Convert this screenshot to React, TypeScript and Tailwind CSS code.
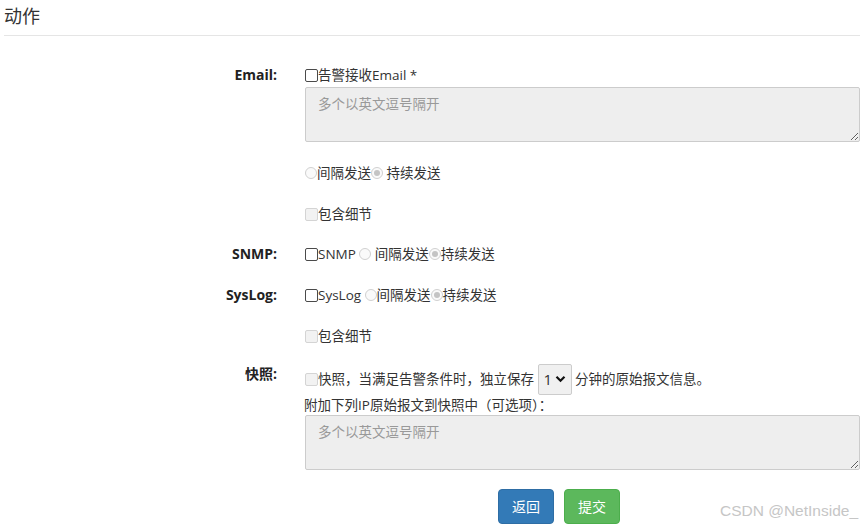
import React from 'react'

const font = { fontFamily: '"Open Sans", "Noto Sans CJK SC", sans-serif' }

function Check({ disabled = false }: { disabled?: boolean }) {
  return (
    <span
      className={
        disabled
          ? 'inline-block w-[13px] h-[13px] rounded-[2px] border border-[#d4d4d4] bg-[#f2f2f2] shrink-0'
          : 'inline-block w-[13px] h-[13px] rounded-[2px] border border-[#4a4a4a] bg-white shrink-0'
      }
    />
  )
}

function Radio({ checked = false }: { checked?: boolean }) {
  return (
    <span className="inline-flex items-center justify-center w-[12px] h-[12px] rounded-full border border-[#d0d0d0] bg-[#fafafa] shrink-0">
      {checked && <span className="w-[6px] h-[6px] rounded-full bg-[#c4c4c4]" />}
    </span>
  )
}

function Area() {
  return (
    <textarea
      readOnly
      placeholder="多个以英文逗号隔开"
      className="block w-full h-[55px] bg-[#eeeeee] border border-[#cccccc] rounded-[2px] px-[12px] py-[6px] text-[13.5px] leading-[20px] text-[#555] placeholder:text-[#999] outline-none resize"
    />
  )
}

function Label({ children }: { children: React.ReactNode }) {
  return <div className="text-right font-bold text-[14px] text-[#222] leading-[18px]">{children}</div>
}

export default function App() {
  return (
    <div className="relative w-[865px] h-[530px] bg-white overflow-hidden text-[#333]" style={font}>
      <div className="mx-[4px] mr-[5px] h-[36px] border-b border-[#e5e5e5]">
        <h1 className="pt-[3px] text-[18px] leading-[26px] text-[#333]">动作</h1>
      </div>

      <div className="grid grid-cols-[277px_1fr] gap-x-[28px] pr-[5px] text-[13.5px] leading-[18px]">
        {/* Email */}
        <div className="mt-[30px]"><Label>Email:</Label></div>
        <div className="mt-[30px]">
          <div className="flex items-center h-[18px]">
            <Check />
            <span>告警接收Email *</span>
          </div>
          <div className="mt-[3px]"><Area /></div>
          <div className="mt-[22px] flex items-center h-[18px]">
            <Radio />
            <span>间隔发送</span>
            <Radio checked />
            <span>&nbsp;持续发送</span>
          </div>
          <div className="mt-[23px] flex items-center h-[18px]">
            <Check disabled />
            <span>包含细节</span>
          </div>
        </div>

        {/* SNMP */}
        <div className="mt-[22px]"><Label>SNMP:</Label></div>
        <div className="mt-[22px] flex items-center h-[18px]">
          <Check />
          <span>SNMP&nbsp;</span>
          <Radio />
          <span>&nbsp;间隔发送</span>
          <Radio checked />
          <span>持续发送</span>
        </div>

        {/* SysLog */}
        <div className="mt-[23px]"><Label>SysLog:</Label></div>
        <div className="mt-[23px]">
          <div className="flex items-center h-[18px]">
            <Check />
            <span>SysLog&nbsp;</span>
            <Radio />
            <span>间隔发送</span>
            <Radio checked />
            <span>持续发送</span>
          </div>
          <div className="mt-[23px] flex items-center h-[18px]">
            <Check disabled />
            <span>包含细节</span>
          </div>
        </div>

        {/* Snapshot */}
        <div className="mt-[20px]"><Label>快照:</Label></div>
        <div className="mt-[19px]">
          <div className="flex items-center h-[30px]">
            <Check disabled />
            <span>快照，当满足告警条件时，独立保存&nbsp;</span>
            <span className="inline-flex items-center gap-[3px] h-[31px] w-[34px] pl-[5px] pr-[2px] border border-[#cccccc] bg-[#f0f0f0] rounded-[2px] text-[15px] shrink-0">
              1
              <svg className="shrink-0" width="11" height="8" viewBox="0 0 11 8" fill="none">
                <path d="M1.5 1.8 L5.5 5.8 L9.5 1.8" stroke="#111" strokeWidth="2.2" />
              </svg>
            </span>
            <span>&nbsp;分钟的原始报文信息。</span>
          </div>
          <div className="mt-[2px] h-[18px] -ml-[1px]">附加下列IP原始报文到快照中（可选项）：</div>
          <div className="mt-[1px]"><Area /></div>
          <div className="mt-[19px] ml-[193px] flex gap-[10px]">
            <button className="h-[35px] w-[56px] rounded-[4px] bg-[#337ab7] border border-[#2e6da4] text-white text-[14px]">返回</button>
            <button className="h-[35px] w-[56px] rounded-[4px] bg-[#5cb85c] border border-[#4cae4c] text-white text-[14px]">提交</button>
          </div>
        </div>
      </div>

      <div
        className="absolute right-[7px] top-[501px] text-[15.5px] leading-[20px] text-[#c6c6c6]"
        style={{ fontFamily: '"Liberation Sans", Arial, sans-serif' }}
      >
        CSDN @NetInside_
      </div>
    </div>
  )
}
